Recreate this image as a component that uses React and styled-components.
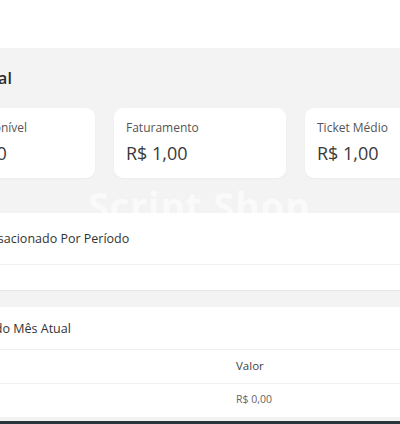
import React from 'react';
import styled, { createGlobalStyle } from 'styled-components';

const GlobalStyle = createGlobalStyle`
    html, body {
        margin: 0;
        padding: 0;
        background: #ffffff;
        overflow: hidden;
    }
    body {
        font-family: "Open Sans", "DejaVu Sans", sans-serif;
        color: #333;
    }
`

const cards = [
    { label: 'Saldo Disponível', value: 'R$ 10,00' },
    { label: 'Faturamento', value: 'R$ 1,00' },
    { label: 'Ticket Médio', value: 'R$ 1,00' },
];

const rows = [
    { name: 'Total', value: 'R$ 0,00' },
];

export default function App() {
    return (
        <>
            <GlobalStyle />
            <TopBar />
            <Main>
                <Content>
                    <Title>Visão Geral</Title>
                    <CardRow>
                        {cards.map(c => (
                            <Card key={c.label}>
                                <CardLabel>{c.label}</CardLabel>
                                <CardValue>{c.value}</CardValue>
                            </Card>
                        ))}
                    </CardRow>
                    <Watermark>Script Shop</Watermark>
                    <Panel>
                        <PanelHeader>Total Transacionado Por Período</PanelHeader>
                        <ChartArea />
                    </Panel>
                    <Panel $gap>
                        <PanelHeader $small>Compras do Mês Atual</PanelHeader>
                        <TableRow $head>
                            <Cell>Data</Cell>
                            <Cell>Valor</Cell>
                        </TableRow>
                        {rows.map(r => (
                            <TableRow key={r.name}>
                                <Cell></Cell>
                                <Cell>{r.value}</Cell>
                            </TableRow>
                        ))}
                    </Panel>
                </Content>
            </Main>
            <Footer />
        </>
    )
}

const TopBar = styled.div`
    height: 48px;
    background: #ffffff;
`
const Main = styled.main`
    background: #f3f3f3;
    height: 369px;
    overflow: hidden;
`
const Content = styled.div`
    position: relative;
    margin-left: -90px;
    width: 580px;
    padding: 19px 13px 0;
    box-sizing: border-box;
`
const Title = styled.h1`
    margin: 0 0 19px;
    font-size: 16px;
    line-height: 22px;
    font-weight: 600;
    letter-spacing: 0.2px;
    color: #2b2b2b;
`
const CardRow = styled.div`
    display: flex;
    gap: 19px;
`
const Card = styled.div`
    flex: 0 0 172px;
    height: 70px;
    box-sizing: border-box;
    background: #fff;
    border-radius: 9px;
    padding: 12px 12px 0;
    box-shadow: 0 1px 2px rgba(0, 0, 0, 0.03);
`
const CardLabel = styled.div`
    font-size: 12px;
    line-height: 16px;
    color: #555;
`
const CardValue = styled.div`
    margin-top: 5px;
    font-size: 18px;
    line-height: 24px;
    color: #3a3a3a;
`
const Watermark = styled.div`
    position: absolute;
    left: 178px;
    top: 135px;
    font-size: 38px;
    line-height: 44px;
    font-weight: 700;
    color: rgba(255, 255, 255, 0.6);
    letter-spacing: 0.8px;
    pointer-events: none;
`
const Panel = styled.section`
    position: relative;
    margin-top: ${p => p.$gap ? '17px' : '35px'};
    background: #fff;
    box-shadow: 0 1px 1px rgba(0, 0, 0, 0.05);
`
const PanelHeader = styled.div`
    height: ${p => p.$small ? '42px' : '51px'};
    display: flex;
    align-items: center;
    padding: 0 16px;
    font-size: 12.5px;
    font-weight: 500;
    color: #333;
    border-bottom: 1px solid #efefef;
`
const ChartArea = styled.div`
    height: 25px;
`
const TableRow = styled.div`
    display: grid;
    grid-template-columns: 301px 1fr;
    height: 33px;
    align-items: center;
    border-bottom: 1px solid #f0f0f0;
    font-size: ${p => p.$head ? '11.5px' : '10.5px'};
    font-weight: ${p => p.$head ? 500 : 400};
    color: ${p => p.$head ? '#444' : '#666'};
`
const Cell = styled.div`
    padding: 0 12px;
    margin-top: -3px;
`
const Footer = styled.div`
    height: 7px;
    background: #2a363c;
    border-top: 4px solid #f3f3f3;
`
